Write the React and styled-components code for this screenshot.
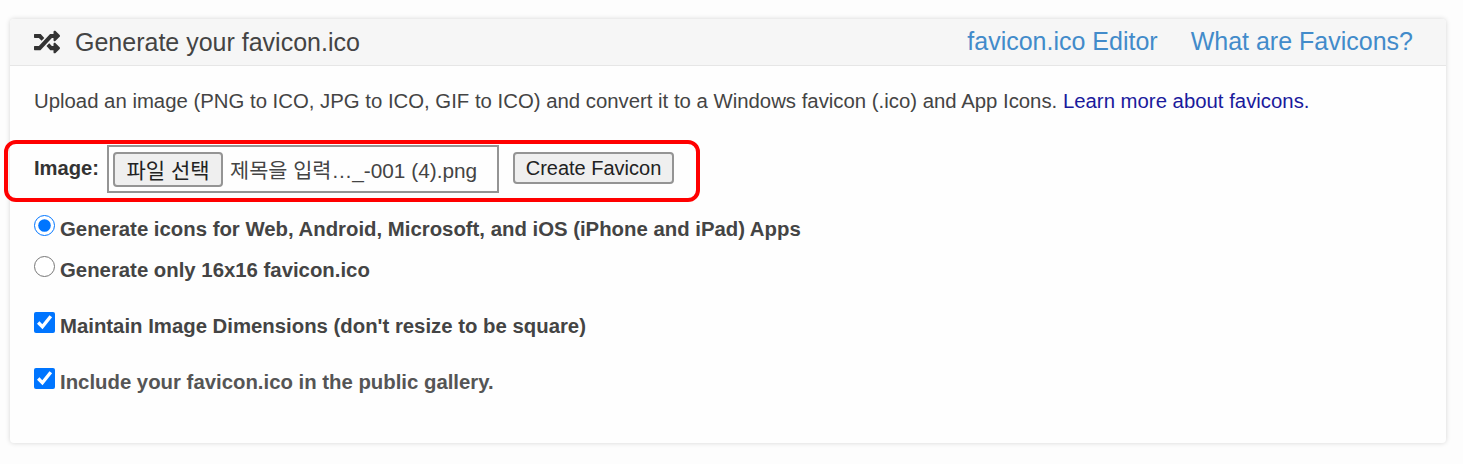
import styled, { createGlobalStyle } from "styled-components";
import { FaRandom } from "react-icons/fa";

const Global = createGlobalStyle`
  html, body {
    margin: 0;
    background: #fdfdfd;
  }
  body {
    font-family: "Liberation Sans", Arial, sans-serif;
    color: #333;
  }
`;

const Page = styled.div`
  width: 1463px;
  height: 464px;
  box-sizing: border-box;
  padding: 19px 17px 0 10px;
  overflow: hidden;
`;

const Card = styled.section`
  height: 424px;
  background: #fefefe;
  border-radius: 4px;
  box-shadow: 0 0 5px rgba(0, 0, 0, 0.16);
`;

const CardHead = styled.header`
  height: 47px;
  box-sizing: border-box;
  display: flex;
  align-items: center;
  padding: 0 33px 0 24px;
  background: #f6f6f6;
  border-bottom: 1px solid #e6e6e6;
  border-radius: 4px 4px 0 0;
`;

const Title = styled.h1`
  display: flex;
  align-items: center;
  gap: 15px;
  margin: 0;
  padding-top: 1px;
  font-size: 25px;
  font-weight: 400;
  color: #444;
  flex: 1;

  svg {
    width: 26px;
    height: 26px;
    margin-top: -2px;
    color: #333;
  }
`;

const HeadLinks = styled.nav`
  display: flex;
  gap: 33px;
  margin-top: -2px;
`;

const HeadLink = styled.a`
  font-size: 25px;
  color: #428bca;
  text-decoration: none;
`;

const CardBody = styled.div`
  padding: 23px 24px 0;
`;

const Intro = styled.p`
  margin: 0;
  font-size: 20.35px;
  line-height: 24px;
  color: #444;
`;

const TextLink = styled.a`
  color: #1a1a9c;
  text-decoration: none;
`;

const UploadRow = styled.div`
  position: relative;
  display: flex;
  align-items: flex-start;
  margin-top: 32px;
  height: 48px;
`;

const Highlight = styled.div`
  position: absolute;
  left: -30px;
  top: -5px;
  width: 696px;
  height: 62px;
  box-sizing: border-box;
  border: 4px solid #f00;
  border-radius: 12px;
  pointer-events: none;
`;

const FieldLabel = styled.label`
  font-size: 20.2px;
  font-weight: 700;
  line-height: 24px;
  margin-top: 11px;
  width: 73px;
  color: #333;
`;

const FileBox = styled.div`
  width: 392px;
  height: 48px;
  box-sizing: border-box;
  display: flex;
  align-items: center;
  padding: 0 4px;
  border: 2px solid #949494;
  background: #fefefe;
`;

const GreyButton = styled.button`
  box-sizing: border-box;
  background: #efefef;
  border: 2px solid #949494;
  border-radius: 4px;
  padding: 0;
  color: #222;
  font-family: "Liberation Sans", "Noto Sans CJK KR", sans-serif;
`;

const ChooseButton = styled(GreyButton)`
  width: 110px;
  height: 35px;
  font-size: 21px;
`;

const FileName = styled.span`
  margin-left: 7px;
  font-family: "Liberation Sans", "Noto Sans CJK KR", sans-serif;
  font-size: 20.8px;
  color: #444;
  white-space: nowrap;
`;

const SubmitButton = styled(GreyButton)`
  width: 161px;
  height: 32px;
  margin: 7px 0 0 14px;
  font-size: 20px;
`;

const Options = styled.div`
  margin-top: 24px;
`;

const Option = styled.label`
  display: flex;
  align-items: center;
  height: 24px;
  margin-top: ${(p) => p.$gap}px;
  font-size: 20.35px;
  font-weight: 700;
  color: ${(p) => (p.$muted ? "#555" : "#444")};
`;

const Control = styled.input`
  width: 21px;
  height: 21px;
  margin: -7px 5px 0 0;
  accent-color: #0075ff;
  flex: none;
`;

export default function App() {
  return (
    <>
      <Global />
      <Page>
        <Card>
          <CardHead>
            <Title>
              <FaRandom />
              Generate your favicon.ico
            </Title>
            <HeadLinks>
              <HeadLink href="#">favicon.ico Editor</HeadLink>
              <HeadLink href="#">What are Favicons?</HeadLink>
            </HeadLinks>
          </CardHead>
          <CardBody>
            <Intro>
              Upload an image (PNG to ICO, JPG to ICO, GIF to ICO) and convert it to a Windows favicon (.ico) and App Icons.{" "}
              <TextLink href="#">Learn more about favicons.</TextLink>
            </Intro>
            <UploadRow>
              <Highlight />
              <FieldLabel>Image:</FieldLabel>
              <FileBox>
                <ChooseButton type="button">파일 선택</ChooseButton>
                <FileName>제목을 입력…_-001 (4).png</FileName>
              </FileBox>
              <SubmitButton type="button">Create Favicon</SubmitButton>
            </UploadRow>
            <Options>
              <Option $gap={0}>
                <Control type="radio" name="mode" defaultChecked />
                Generate icons for Web, Android, Microsoft, and iOS (iPhone and iPad) Apps
              </Option>
              <Option $gap={17}>
                <Control type="radio" name="mode" />
                Generate only 16x16 favicon.ico
              </Option>
              <Option $gap={32}>
                <Control type="checkbox" defaultChecked />
                Maintain Image Dimensions (don't resize to be square)
              </Option>
              <Option $gap={32} $muted>
                <Control type="checkbox" defaultChecked />
                Include your favicon.ico in the public gallery.
              </Option>
            </Options>
          </CardBody>
        </Card>
      </Page>
    </>
  );
}
